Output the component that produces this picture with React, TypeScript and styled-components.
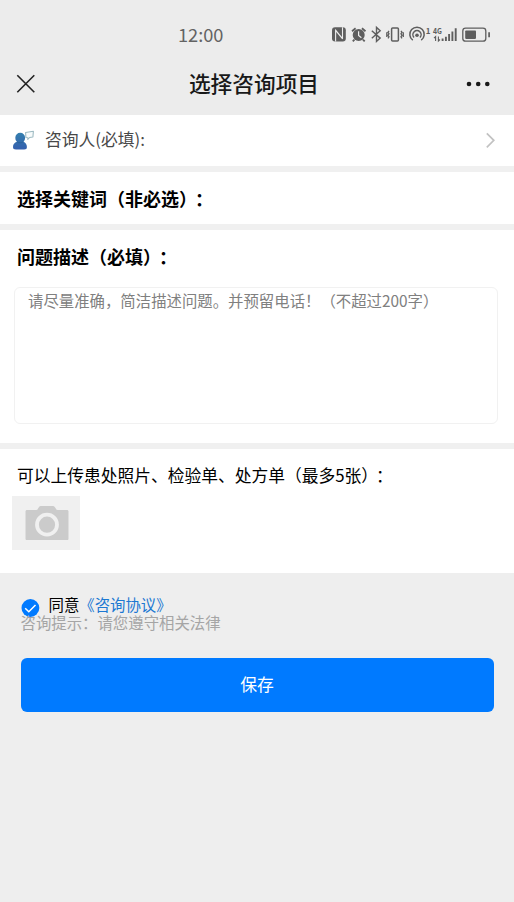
import React from "react";
import styled, { createGlobalStyle } from "styled-components";

const GlobalStyle = createGlobalStyle`
  *, *::before, *::after { box-sizing: border-box; }
  body {
    margin: 0;
    background: #eeeeee;
    font-family: "Noto Sans CJK SC", "Noto Sans", sans-serif;
    text-spacing-trim: space-all;
  }
`;

const Page = styled.div`
  display: flex;
  flex-direction: column;
  width: 100%;
  min-height: 902px;
  background: #eeeeee;
  color: #000;
`;

const Header = styled.header`
  height: 115px;
  flex: none;
  background: #ececec;
`;

const StatusBar = styled.div`
  height: 56px;
  padding: 14px 23px 0 178px;
  display: flex;
  justify-content: space-between;
  align-items: center;
`;

const Clock = styled.span`
  margin-top: -2px;
  font-size: 18.2px;
  line-height: 26px;
  color: #636363;
`;

const StatusIcons = styled.svg`
  display: block;
  width: 160px;
  height: 24px;
  font-family: "Noto Sans CJK SC", sans-serif;
  font-weight: 700;
`;

const NavBar = styled.nav`
  height: 56px;
  padding: 0 23px 0 15px;
  display: grid;
  grid-template-columns: 54px 1fr 52px;
  align-items: center;
`;

const Title = styled.h1`
  margin: -2px 0 0;
  font-size: 21.7px;
  line-height: 32px;
  font-weight: 500;
  color: #191919;
  text-align: center;
`;

const NavButton = styled.button<{ $end?: boolean }>`
  display: flex;
  justify-content: ${(p) => (p.$end ? "flex-end" : "flex-start")};
  padding: 0;
  border: 0;
  background: none;
`;

const Form = styled.main`
  display: flex;
  flex-direction: column;
  gap: 6px;
  background: #f0f0f0;
`;

const Section = styled.section<{ $height: number }>`
  height: ${(p) => p.$height}px;
  background: #fff;
`;

const PersonRow = styled(Section)`
  display: flex;
  align-items: center;
  padding: 0 18px 0 12px;
`;

const PersonLabel = styled.span`
  flex: 1;
  margin: -4px 0 0 10px;
  font-size: 16.8px;
  line-height: 24px;
  color: #484848;
`;

const Heading = styled.h2`
  margin: 0;
  padding: 13px 17px 0;
  font-size: 18px;
  line-height: 26px;
  font-weight: 700;
`;

const Colon = styled.span`
  margin-left: -2px;
`;

const Description = styled.textarea`
  display: block;
  width: 484px;
  height: 137px;
  margin: 18px 0 0 14px;
  padding: 0 13px;
  border: 1px solid #f1f1f1;
  border-radius: 6px;
  outline: 0;
  resize: none;
  background: #fff;
  font-family: inherit;
  font-size: 15.4px;
  line-height: 24px;
  text-spacing-trim: space-all;
  &::placeholder { color: #808080; opacity: 1; }
`;

const UploadLabel = styled.p`
  margin: 0;
  padding: 14px 17px 0;
  font-size: 16.75px;
  line-height: 24px;
`;

const UploadButton = styled.button`
  display: flex;
  align-items: center;
  justify-content: center;
  width: 68px;
  height: 54px;
  margin: 9px 0 0 12px;
  padding: 0 0 0 2px;
  border: 0;
  background: #f0f0f0;
`;

const Footer = styled.footer`
  padding: 22px 20.5px 0;
`;

const Agreement = styled.label`
  display: flex;
  height: 18px;
  font-size: 15.4px;
  line-height: 18px;
`;

const CheckMark = styled.svg`
  width: 18px;
  height: 18px;
  margin: 4px 10px 0 0;
  overflow: visible;
`;

const Link = styled.a`
  color: #1c78d2;
`;

const Hint = styled.p`
  margin: 0;
  font-size: 15.4px;
  line-height: 18px;
  color: #a5a5a5;
`;

const SaveButton = styled.button`
  display: block;
  width: 473px;
  height: 54px;
  margin-top: 27px;
  padding: 0 0 3px;
  border: 0;
  border-radius: 6px;
  background: #007aff;
  color: #fff;
  font-family: inherit;
  font-size: 16.8px;
  line-height: 24px;
`;

function StatusGlyphs() {
  return (
    <StatusIcons viewBox="331 23 160 24" fill="none" stroke="#5e5e5e" strokeWidth="1.5">
      {/* NFC */}
      <rect x="332" y="27.300" width="13.800" height="14.200" rx="3" fill="#5e5e5e" stroke="none" />
      <path d="M335.600 41.500V30.400l7 8.600M342.500 27.300v11.500M335.600 30.200l6.900 8.400" stroke="#ececec" strokeWidth="1.100" />
      {/* alarm */}
      <circle cx="358.7" cy="35" r="6" fill="#5e5e5e" stroke="none" />
      <path d="M352 31.2l3.6-3M365.5 31.2l-3.6-3M354.4 39.6l-1.6 1.8M363 39.6l1.7 1.8" strokeWidth="1.8" />
      <path d="M358.6 31.2v4.2l2.8 2.3" stroke="#ececec" strokeWidth="1.2" />
      {/* bluetooth */}
      <path d="M371.8 30.7l8.4 7.4-3.7 3.4V27.4l3.7 3.4-8.4 7.4" strokeWidth="1.4" />
      {/* vibrate */}
      <rect x="391.6" y="28" width="6.8" height="13" rx="1" />
      <path d="M389 30.8l-1 1.500 1 1.500-1 1.500 1 1.500-1 1.500M386.800 32.300v4.800M401 30.800l1 1.500-1 1.500 1 1.500-1 1.500 1 1.500M403.300 32.300v4.800" strokeWidth="1.300" />
      {/* hotspot */}
      <path d="M412.8 40.2a7.2 7.2 0 1 1 8.400 0M414 37.5a4.1 4.1 0 1 1 6 0" />
      <circle cx="417" cy="35.200" r="1.8" fill="#5e5e5e" stroke="none" />
      <text x="425.7" y="33.7" fontSize="8" fill="#5e5e5e" stroke="none">1</text>
      {/* mobile signal */}
      <text x="433" y="34" fontSize="8" textLength="9" lengthAdjust="spacingAndGlyphs" fill="#5e5e5e" stroke="none">4G</text>
      <path d="M435.6 41v-4.400l-1.600 1.500M438.400 36.500V41l1.600-1.500" strokeWidth="1.100" />
      <path d="M442.6 41v-2.4M445.9 41v-4.2M449.1 41v-7M452.4 41V31.4M455.7 41V28.3" strokeWidth="1.9" />
      {/* battery */}
      <rect x="462.8" y="28.2" width="23" height="13" rx="2.8" strokeWidth="1.3" />
      <rect x="465.2" y="30.5" width="10.8" height="8.4" rx="0.8" fill="#5e5e5e" stroke="none" />
      <path d="M489.1 32.3v4.9" strokeWidth="1.7" />
    </StatusIcons>
  );
}

export default function App() {
  return (
    <>
      <GlobalStyle />
      <Page>
        <Header>
          <StatusBar>
            <Clock>12:00</Clock>
            <StatusGlyphs />
          </StatusBar>
          <NavBar>
            <NavButton aria-label="关闭">
              <svg width="22" height="22" viewBox="0 0 22 22" fill="none" stroke="#222" strokeWidth="1.6">
                <path d="M2.3 2.3l17 17M19.3 2.3l-17 17" />
              </svg>
            </NavButton>
            <Title>选择咨询项目</Title>
            <NavButton $end aria-label="更多">
              <svg width="26" height="6" viewBox="0 0 26 6" fill="#191919">
                <circle cx="4" cy="3" r="2.3" />
                <circle cx="13.2" cy="3" r="2.3" />
                <circle cx="22.3" cy="3" r="2.3" />
              </svg>
            </NavButton>
          </NavBar>
        </Header>

        <Form>
          <PersonRow $height={51}>
            <svg width="23" height="21" viewBox="0 0 23 21">
              <defs>
                <linearGradient id="person" x1="0" y1="0" x2="0" y2="1">
                  <stop offset="0" stopColor="#347fae" />
                  <stop offset="1" stopColor="#345fae" />
                </linearGradient>
              </defs>
              <path d="M13.6 2.5l7.8-1.2-.5 5.7-3.3.5-1.8 2 .1-1.8-2-.2z" fill="#f8fbfb" stroke="#9dbac2" strokeWidth="1.1" strokeLinejoin="round" />
              <path d="M8.2 2.8a4.9 4.9 0 0 1 4.9 4.9c0 1.6-.6 3-1.7 4 2.2.8 3.5 2.9 3.5 5.2 0 1.8-1 2.5-2.7 2.5H4c-2 0-3-.7-3-2.5 0-2.5 1.5-4.4 3.9-5.1a5 5 0 0 1-1.6-4.1 4.9 4.9 0 0 1 4.9-4.9z" fill="url(#person)" />
              <path d="M5 11.8c2 1.4 4.3 1.4 6.4-.1" fill="none" stroke="#275f96" strokeWidth="0.8" />
            </svg>
            <PersonLabel>咨询人(必填):</PersonLabel>
            <svg width="12" height="18" viewBox="0 0 12 18" fill="none" stroke="#c2c2c2" strokeWidth="1.7">
              <path d="M2.8 1.300l7 7-7 7" />
            </svg>
          </PersonRow>

          <Section $height={52}>
            <Heading>选择关键词（非必选）<Colon>：</Colon></Heading>
          </Section>

          <Section $height={213}>
            <Heading>问题描述（必填）<Colon>：</Colon></Heading>
            <Description placeholder="请尽量准确，简洁描述问题。并预留电话！（不超过200字）" />
          </Section>

          <Section $height={124}>
            <UploadLabel>可以上传患处照片、检验单、处方单（最多5张）<Colon>：</Colon></UploadLabel>
            <UploadButton aria-label="上传照片">
              <svg width="44" height="36" viewBox="0 0 44 36">
                <path d="M2 5h9.5c1.6 0 2-3.7 4-4h12.6c2.3.3 2.6 4 4.4 4H42c1 0 1.5.6 1.5 1.5v27c0 1-.5 1.5-1.5 1.5H2C1 35 .5 34.5 .5 33.5v-27C.5 5.6 1 5 2 5z" fill="#cbcbcb" />
                <circle cx="22" cy="19.7" r="10" fill="#cbcbcb" stroke="#f0f0f0" strokeWidth="3.8" />
              </svg>
            </UploadButton>
          </Section>
        </Form>

        <Footer>
          <Agreement>
            <CheckMark viewBox="0 0 18 18">
              <circle cx="9.4" cy="9" r="8.9" fill="#007aff" />
              <path d="M4.200 9.3l3.6 3.5 6.7-6.8" fill="none" stroke="#fff" strokeWidth="1.5" />
            </CheckMark>
            同意<Link>《咨询协议》</Link>
          </Agreement>
          <Hint>咨询提示：请您遵守相关法律</Hint>
          <SaveButton>保存</SaveButton>
        </Footer>
      </Page>
    </>
  );
}
